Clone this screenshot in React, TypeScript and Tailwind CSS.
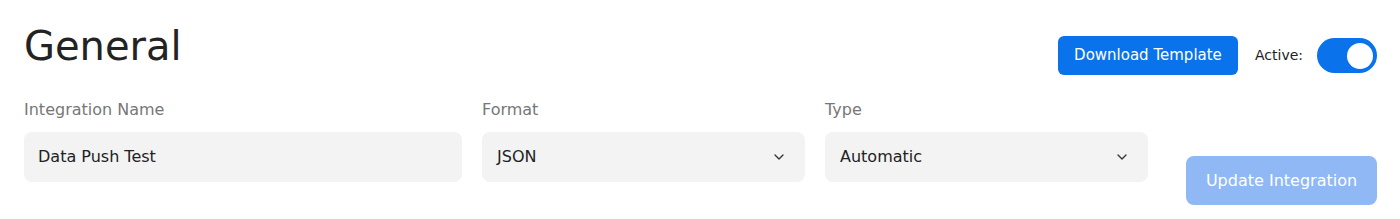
import { ChevronDown } from 'lucide-react'

const font = { fontFamily: '"DejaVu Sans", "Noto Sans", sans-serif' }

function SelectBox({ value }: { value: string }) {
  return (
    <div className="flex h-[50px] w-[323px] items-center justify-between rounded-lg bg-[#f3f3f3] pl-[15px] pr-[18px] text-[16px] text-[#222]">
      <span>{value}</span>
      <ChevronDown className="h-[16px] w-[16px] text-[#333]" strokeWidth={2} />
    </div>
  )
}

export default function App() {
  return (
    <div className="h-[219px] w-[1400px] bg-white pl-6 pr-[23px]" style={font}>
      <div className="flex items-start justify-between pt-[22px]">
        <h1 className="text-[40px] leading-[48px] text-[#232323]">General</h1>
        <div className="mt-[14px] flex items-center">
          <button className="h-[39px] w-[180px] rounded-md bg-[#0a72ea] text-[15px] text-white">
            Download Template
          </button>
          <span className="ml-[17px] text-[14px] text-[#222]">Active:</span>
          <div className="ml-[14px] flex h-[35px] w-[60px] items-center justify-end rounded-full bg-[#0a72ea] pr-[4px]">
            <div className="h-[26px] w-[26px] rounded-full bg-white" />
          </div>
        </div>
      </div>

      <div className="mt-[25px] flex items-end">
        <div className="flex flex-col">
          <label className="mb-[12px] text-[16px] leading-[20px] text-[#777]">Integration Name</label>
          <div className="flex h-[50px] w-[438px] items-center rounded-lg bg-[#f3f3f3] px-[14px] text-[16px] text-[#222]">
            Data Push Test
          </div>
        </div>
        <div className="ml-5 flex flex-col">
          <label className="mb-[12px] text-[16px] leading-[20px] text-[#777]">Format</label>
          <SelectBox value="JSON" />
        </div>
        <div className="ml-5 flex flex-col">
          <label className="mb-[12px] text-[16px] leading-[20px] text-[#777]">Type</label>
          <SelectBox value="Automatic" />
        </div>
        <button className="mb-[-23px] ml-[38px] h-[49px] w-[191px] rounded-lg bg-[#8fb8f5] text-[16px] text-white">
          Update Integration
        </button>
      </div>
    </div>
  )
}
